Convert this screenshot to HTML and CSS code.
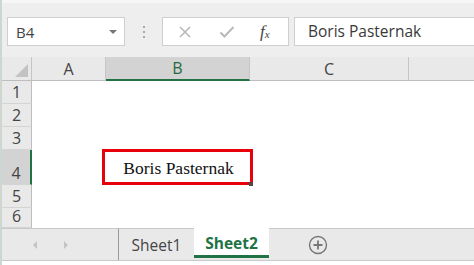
FILE: index.html
```html
<!DOCTYPE html>
<html lang="en">
<head>
    <meta charset="UTF-8">
    <title>Sheet2 - Excel</title>
    <link rel="stylesheet" href="styles.css">
</head>
<body>
    <div class="app">
        <!-- Formula bar -->
        <div class="toolbar">
            <div class="name-box">
                <span>B4</span>
                <span class="drop-arrow"></span>
            </div>
            <div class="grip">
                <span></span><span></span><span></span>
            </div>
            <div class="func-box">
                <svg class="tool-icon" width="14" height="14" viewBox="0 0 14 14">
                    <path d="M2 2 L12 12 M12 2 L2 12" stroke="#b9b9b9" stroke-width="1.6" fill="none"/>
                </svg>
                <svg class="tool-icon" width="16" height="14" viewBox="0 0 16 14">
                    <path d="M1.5 7.5 L5.5 11.5 L14.5 2" stroke="#b9b9b9" stroke-width="2" fill="none"/>
                </svg>
                <span class="fx"><i>f</i><sub>x</sub></span>
            </div>
            <div class="formula-box">Boris Pasternak</div>
        </div>

        <!-- Sheet grid -->
        <div class="grid">
            <div class="corner"><span class="corner-tri"></span></div>
            <div class="col-head">A</div>
            <div class="col-head selected">B</div>
            <div class="col-head">C</div>
            <div class="col-head last"></div>

            <div class="row-head">1</div>
            <div class="cell"></div><div class="cell"></div><div class="cell"></div><div class="cell"></div>

            <div class="row-head">2</div>
            <div class="cell"></div><div class="cell"></div><div class="cell"></div><div class="cell"></div>

            <div class="row-head">3</div>
            <div class="cell"></div><div class="cell"></div><div class="cell"></div><div class="cell"></div>

            <div class="row-head tall selected">4</div>
            <div class="cell"></div>
            <div class="cell active">Boris Pasternak</div>
            <div class="cell"></div><div class="cell"></div>

            <div class="row-head">5</div>
            <div class="cell"></div><div class="cell"></div><div class="cell"></div><div class="cell"></div>

            <div class="row-head">6</div>
            <div class="cell"></div><div class="cell"></div><div class="cell"></div><div class="cell"></div>
        </div>

        <!-- Sheet tabs -->
        <div class="tab-bar">
            <div class="nav">
                <span class="nav-arrow left"></span>
                <span class="nav-arrow right"></span>
            </div>
            <div class="tab">Sheet1</div>
            <div class="tab current">Sheet2</div>
            <div class="tab-rest">
                <span class="add-sheet">
                    <svg width="20" height="20" viewBox="0 0 20 20">
                        <circle cx="10" cy="10" r="8.5" stroke="#777" stroke-width="1.4" fill="none"/>
                        <path d="M10 5.5 V14.5 M5.5 10 H14.5" stroke="#777" stroke-width="1.8"/>
                    </svg>
                </span>
            </div>
        </div>
        <div class="status"></div>
    </div>
</body>
</html>
```

FILE: styles.css
```css
* {
    margin: 0;
    padding: 0;
    box-sizing: border-box;
}

body {
    width: 474px;
    height: 265px;
    overflow: hidden;
    background: #ffffff;
    font-family: 'Open Sans', 'Noto Sans', sans-serif;
    color: #333;
}

.app {
    border-left: 2px solid #cdd6cf;
    height: 265px;
}

/* Formula bar */
.toolbar {
    height: 57px;
    background: #eeeeee;
    border-top: 3px solid #f6f6f6;
    padding-top: 14px;
    padding-left: 5px;
    display: flex;
    align-items: flex-start;
}

.name-box {
    width: 118px;
    height: 29px;
    background: #fff;
    border: 1px solid #cfcfcf;
    display: flex;
    align-items: center;
    justify-content: space-between;
    padding: 0 7px 0 8px;
    font-size: 15px;
    color: #444;
}

.drop-arrow {
    width: 0;
    height: 0;
    border-left: 4px solid transparent;
    border-right: 4px solid transparent;
    border-top: 4px solid #777;
}

.grip {
    width: 37px;
    height: 29px;
    display: flex;
    flex-direction: column;
    align-items: center;
    justify-content: center;
    gap: 3px;
}

.grip span {
    width: 2px;
    height: 2px;
    background: #aaa;
}

.func-box {
    width: 127px;
    height: 29px;
    background: #fff;
    border: 1px solid #cfcfcf;
    display: flex;
    align-items: center;
    padding-left: 15px;
    gap: 27px;
}

.fx {
    font-family: 'Liberation Serif', serif;
    font-size: 17px;
    color: #444;
    margin-left: -2px;
}

.fx sub {
    font-size: 11px;
    font-style: italic;
    vertical-align: -1px;
}

.formula-box {
    flex: 1;
    height: 29px;
    margin-left: 5px;
    background: #fff;
    border: 1px solid #cfcfcf;
    border-right: none;
    padding-left: 13px;
    font-size: 15.5px;
    line-height: 27px;
    color: #3a3a3a;
}

/* Grid */
.grid {
    display: grid;
    grid-template-columns: 30px 74px 144px 159px 1fr;
    grid-template-rows: 24px 23px 23px 23px 35px 23px 20px;
}

.corner,
.col-head,
.row-head {
    background: #e9e9e9;
    font-size: 16px;
    color: #444;
}

.corner {
    position: relative;
    border-right: 1px solid #c6c6c6;
    border-bottom: 1px solid #bdbdbd;
}

.corner-tri {
    position: absolute;
    right: 3px;
    bottom: 3px;
    width: 0;
    height: 0;
    border-left: 13px solid transparent;
    border-bottom: 13px solid #c3c3c3;
}

.col-head {
    display: flex;
    align-items: center;
    justify-content: center;
    border-right: 1px solid #c6c6c6;
    border-bottom: 1px solid #bdbdbd;
}

.col-head.last {
    border-right: none;
}

.col-head.selected {
    background: #d3d3d3;
    color: #1e6b40;
    border-bottom: 2px solid #217346;
}

.row-head {
    display: flex;
    align-items: flex-end;
    justify-content: center;
    padding-bottom: 0;
    border-right: 1px solid #bdbdbd;
    border-bottom: 1px solid #d4d4d4;
}

.row-head.selected {
    background: #d3d3d3;
    border-right: 2px solid #217346;
}

.cell {
    background: #fff;
}

.cell.active {
    position: relative;
    display: flex;
    align-items: center;
    justify-content: center;
    font-family: 'Liberation Serif', serif;
    font-size: 17.5px;
    color: #111;
    padding-left: 1px;
    padding-top: 2px;
}

.cell.active::before {
    content: '';
    position: absolute;
    left: -4px;
    right: -3px;
    top: -1px;
    bottom: 0;
    border: 3px solid #e8000b;
}

.cell.active::after {
    content: '';
    position: absolute;
    right: -3px;
    bottom: -1px;
    width: 4px;
    height: 4px;
    background: #4a4a4a;
}

/* Tabs */
.tab-bar {
    height: 32px;
    display: flex;
    background: #e9e9e9;
}

.nav {
    width: 117px;
    display: flex;
    align-items: center;
    gap: 27px;
    padding-left: 31px;
    border-top: 1px solid #c9c9c9;
    border-right: 1px solid #9a9a9a;
}

.nav-arrow {
    width: 0;
    height: 0;
    border-top: 4px solid transparent;
    border-bottom: 4px solid transparent;
}

.nav-arrow.left {
    border-right: 4px solid #c4c4c4;
}

.nav-arrow.right {
    border-left: 4px solid #c4c4c4;
}

.tab {
    width: 75px;
    display: flex;
    align-items: center;
    justify-content: center;
    font-size: 15.5px;
    color: #444;
    border-top: 1px solid #c9c9c9;
}

.tab.current {
    background: #fff;
    border-top: none;
    font-weight: 700;
    color: #217346;
    border-bottom: 3px solid #217346;
    margin-bottom: 2px;
    padding-top: 3px;
}

.tab-rest {
    flex: 1;
    border-top: 1px solid #c9c9c9;
    display: flex;
    align-items: center;
    padding-left: 39px;
}

.add-sheet {
    display: flex;
}

.status {
    height: 5px;
    border-top: 1px solid #c9c9c9;
    background: #fff;
}
```
